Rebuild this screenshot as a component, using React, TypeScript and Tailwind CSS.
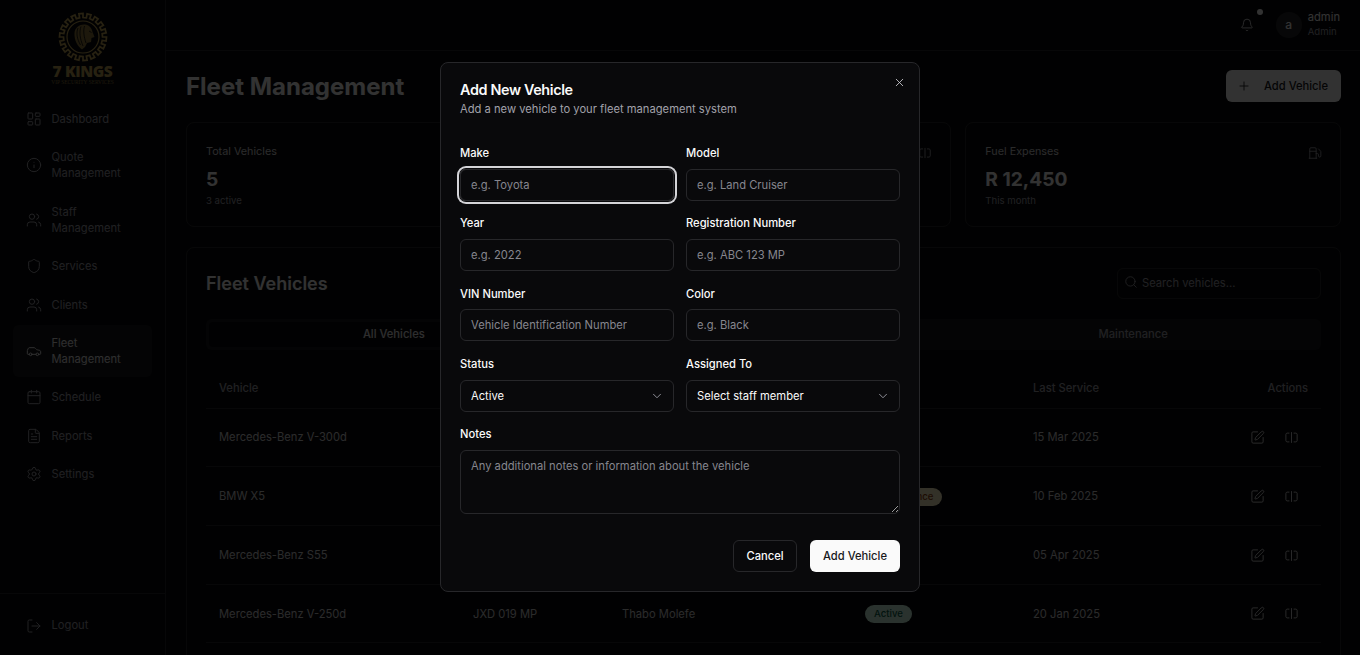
import {
  Bell,
  Calendar,
  Car,
  ChevronDown,
  FileText,
  Fuel,
  Info,
  LayoutDashboard,
  LogOut,
  Plus,
  Search,
  Settings,
  Shield,
  SquarePen,
  SquareSplitHorizontal,
  Users,
  X,
} from 'lucide-react';

const font = { fontFamily: 'Inter, "Liberation Sans", sans-serif' };

const menuItems = [
  { label: ['Dashboard'], icon: LayoutDashboard },
  { label: ['Quote', 'Management'], icon: Info },
  { label: ['Staff', 'Management'], icon: Users },
  { label: ['Services'], icon: Shield },
  { label: ['Clients'], icon: Users },
  { label: ['Fleet', 'Management'], icon: Car, active: true },
  { label: ['Schedule'], icon: Calendar },
  { label: ['Reports'], icon: FileText },
  { label: ['Settings'], icon: Settings },
];

// cells the dialog covers stay empty
const vehicles = [
  { name: 'Mercedes-Benz V-300d', reg: '', staff: '', status: '', service: '15 Mar 2025' },
  { name: 'BMW X5', reg: '', staff: '', status: 'Maintenance', service: '10 Feb 2025' },
  { name: 'Mercedes-Benz S55', reg: '', staff: '', status: '', service: '05 Apr 2025' },
  { name: 'Mercedes-Benz V-250d', reg: 'JXD 019 MP', staff: 'Thabo Molefe', status: 'Active', service: '20 Jan 2025' },
];

function gearPath() {
  const teeth = 18;
  const cx = 25;
  const cy = 25;
  let d = '';
  for (let i = 0; i < teeth; i++) {
    const a = (i / teeth) * Math.PI * 2;
    const step = (Math.PI * 2) / teeth / 2;
    const pts = [
      [19.5, a],
      [23.5, a],
      [23.5, a + step],
      [19.5, a + step],
    ];
    pts.forEach(([r, t], j) => {
      const x = (cx + r * Math.cos(t)).toFixed(2);
      const y = (cy + r * Math.sin(t)).toFixed(2);
      d += `${i === 0 && j === 0 ? 'M' : 'L'}${x} ${y} `;
    });
  }
  return d + 'Z';
}

function Logo() {
  return (
    <div className="flex flex-col items-center pt-3 h-[101px]">
      <svg width="50" height="50" viewBox="0 0 50 50" fill="none" stroke="#c4a657">
        <path d={gearPath()} strokeWidth="1.7" />
        <circle cx="25" cy="25" r="16" strokeWidth="1.2" />
        <path
          d="M16.5 21 C17 15 22 12 27 12.5 C31 13 34 16 34.5 20 L36.5 25 L33.5 26 L33 30 L29 31 L27 35 L24 37.5 C20 35 16 28 16.5 21 Z"
          fill="#8f793f"
          stroke="none"
        />
        <path
          d="M20 16 C18 21 19 27 22.5 33 M23 14.5 C21 20 22 27 25 34 M26.5 14 C25 19 26 25 28 31 M31 19 L33.5 20.5"
          stroke="#09090b"
          strokeWidth="0.8"
        />
      </svg>
      <div
        className="text-[15.5px] leading-[13px] font-extrabold text-[#c4a657] mt-[3px] tracking-tight"
        style={{ fontFamily: '"Open Sans", sans-serif' }}
      >
        7 KINGS
      </div>
      <div
        className="text-[5.4px] leading-[6px] mt-[1px] text-[#8f793f]"
        style={{ fontFamily: '"Liberation Serif", serif' }}
      >
        VIP SECURITY SERVICES
      </div>
    </div>
  );
}

function Sidebar() {
  return (
    <aside className="w-[166px] shrink-0 h-screen border-r border-[#27272a] flex flex-col">
      <Logo />
      <nav className="flex-1 px-[13px] flex flex-col gap-[2.4px]">
        {menuItems.map(({ label, icon: Icon, active }) => (
          <div
            key={label.join(' ')}
            className={`flex items-center gap-[9.5px] px-[13px] py-[10px] rounded-md text-[11.2px] leading-4 text-[#a1a1aa] ${
              active ? 'bg-[#27272a]/50 text-[#e4e4e7]' : ''
            }`}
          >
            <Icon size={16} strokeWidth={1.5} className="shrink-0" />
            <span>
              {label.map((line) => (
                <span key={line} className="block">
                  {line}
                </span>
              ))}
            </span>
          </div>
        ))}
      </nav>
      <div className="h-[62px] border-t border-[#27272a] px-[26px] pt-[2px] flex items-center gap-[9.5px] text-[11.2px] text-[#a1a1aa]">
        <LogOut size={16} strokeWidth={1.5} />
        <span>Logout</span>
      </div>
    </aside>
  );
}

function Header() {
  return (
    <header className="h-[51px] shrink-0 border-b border-[#27272a] flex items-center justify-end pr-5 pb-[1px]">
      <div className="relative mr-[22px]">
        <Bell size={14} strokeWidth={1.5} className="text-[#e4e4e7]" />
        <span className="absolute -top-[9px] -right-[9px] w-[6px] h-[6px] rounded-full bg-[#fafafa]" />
      </div>
      <div className="w-[26px] h-[26px] rounded-full bg-[#27272a] flex items-center justify-center text-[12px] font-medium text-[#fafafa]">
        a
      </div>
      <div className="ml-[6px]">
        <div className="text-[11.2px] leading-[15px] text-[#fafafa]">admin</div>
        <div className="text-[9.6px] leading-[14px] text-[#a1a1aa]">Admin</div>
      </div>
    </header>
  );
}

function StatCard({ title, value, note, icon }: { title?: string; value?: string; note?: string; icon?: React.ReactNode }) {
  return (
    <div className="relative h-[105px] rounded-lg border border-[#27272a] px-[19px] pt-[21px]">
      <div className="text-[10.8px] leading-4 text-[#d4d4d8]">{title}</div>
      <div className="text-[19.2px] leading-7 font-bold text-[#fafafa] mt-[5px]">{value}</div>
      <div className="text-[9.6px] leading-3 text-[#a1a1aa] mt-[2px]">{note}</div>
      {icon && <div className="absolute top-[23px] right-[18px] text-[#a1a1aa]">{icon}</div>}
    </div>
  );
}

function StatusPill({ status }: { status: string }) {
  if (!status) return null;
  const colour = status === 'Active' ? 'bg-[#d1fae5] text-[#065f46]' : 'bg-[#fef3c7] text-[#92400e]';
  return (
    <span className={`inline-block h-[18px] px-[9px] rounded-full text-[9.6px] leading-[18px] font-medium ${colour}`}>
      {status}
    </span>
  );
}

function FleetPage() {
  return (
    <main className="flex-1 overflow-hidden pt-[19px] pl-5 pr-[19px]">
      <div className="flex items-center justify-between h-[32px]">
        <h1 className="text-2xl font-bold text-[#fafafa] pt-[2px]">Fleet Management</h1>
        <button className="h-8 w-[115px] rounded-md bg-[#fafafa] text-[#18181b] text-[11.2px] font-medium flex items-center pl-[11px] gap-[13px]">
          <Plus size={14} strokeWidth={1.5} />
          Add Vehicle
        </button>
      </div>

      <div className="grid grid-cols-3 gap-[14px] mt-[20px]">
        <StatCard title="Total Vehicles" value="5" note="3 active" />
        <StatCard icon={<SquareSplitHorizontal size={14} strokeWidth={1.5} />} />
        <StatCard title="Fuel Expenses" value="R 12,450" note="This month" icon={<Fuel size={14} strokeWidth={1.5} />} />
      </div>

      <section className="mt-[20px] rounded-lg border border-[#27272a] px-[19px] pt-5 h-[500px]">
        <div className="flex items-center justify-between h-[30px]">
          <h2 className="text-[18px] font-semibold text-[#fafafa]">Fleet Vehicles</h2>
          <div className="w-[204px] h-[31px] rounded-md border border-[#27272a] flex items-center px-[6px] gap-[4px] text-[#a1a1aa]">
            <Search size={14} strokeWidth={1.5} className="-mt-[2px]" />
            <span className="text-[11.2px]">Search vehicles...</span>
          </div>
        </div>

        <div className="mt-[21px] h-[31px] p-[3px] rounded-md bg-[#27272a]/50 grid grid-cols-3 text-[11.2px] font-medium text-[#a1a1aa]">
          <div className="rounded bg-[#09090b] flex items-center justify-center text-[#e4e4e7]">All Vehicles</div>
          <div />
          <div className="flex items-center justify-center">Maintenance</div>
        </div>

        <table className="w-full mt-[19px] text-[11.2px] text-[#d4d4d8] table-fixed">
          <thead>
            <tr className="border-b border-[#27272a] h-[39px] text-left text-[#a1a1aa]">
              <th className="font-medium pl-[13px] pt-[1px] w-[267px]">Vehicle</th>
              <th className="font-medium w-[149px]" />
              <th className="font-medium w-[243px]" />
              <th className="font-medium w-[168px]" />
              <th className="font-medium pt-[1px] w-[200px]">Last Service</th>
              <th className="font-medium pt-[1px] text-right pr-[13px]">Actions</th>
            </tr>
          </thead>
          <tbody>
            {vehicles.map((v) => (
              <tr key={v.name} className="border-b border-[#27272a] h-[58.7px]">
                <td className="pl-[13px] pt-[1px]">{v.name}</td>
                <td className="pt-[1px]">{v.reg}</td>
                <td className="pt-[1px]">{v.staff}</td>
                <td className="pt-[1px]">
                  <StatusPill status={v.status} />
                </td>
                <td className="pt-[1px]">{v.service}</td>
                <td className="pt-[1px]">
                  <div className="flex justify-end gap-[19.5px] pr-[22px] text-[#d4d4d8]">
                    <SquarePen size={15} strokeWidth={1.5} />
                    <SquareSplitHorizontal size={15} strokeWidth={1.5} />
                  </div>
                </td>
              </tr>
            ))}
          </tbody>
        </table>
      </section>
    </main>
  );
}

const fieldClass =
  'w-full h-8 rounded-md border border-[#27272a] bg-transparent px-[10px] text-[11.2px] text-[#fafafa] placeholder:text-[#86868e] outline-none';
const labelClass = 'block text-[11.2px] leading-[17px] pt-[0.3px] font-medium text-[#fafafa] mb-[6.7px]';

function Field({ label, placeholder, focused }: { label: string; placeholder: string; focused?: boolean }) {
  return (
    <div>
      <label className={labelClass}>{label}</label>
      <input
        placeholder={placeholder}
        className={`${fieldClass} ${focused ? 'ring-2 ring-[#d4d4d8] ring-offset-1 ring-offset-[#09090b]' : ''}`}
      />
    </div>
  );
}

function SelectField({ label, value }: { label: string; value: string }) {
  return (
    <div>
      <div className={labelClass}>{label}</div>
      <div className="h-8 rounded-md border border-[#27272a] pl-[10px] pr-[9px] pt-[1px] flex items-center justify-between text-[11.2px] text-[#fafafa]">
        {value}
        <ChevronDown size={14} strokeWidth={1.5} className="text-[#a1a1aa]" />
      </div>
    </div>
  );
}

function AddVehicleDialog() {
  return (
    <div className="fixed inset-0 bg-black/80">
      <div className="absolute left-[440px] top-[62px] w-[480px] h-[530px] rounded-lg border border-[#27272a] bg-[#09090b] px-[19px] pt-[17px]">
        <X size={13} strokeWidth={1.5} className="absolute top-[13px] right-[13px] text-[#d4d4d8]" />
        <h2 className="text-[14.4px] leading-5 font-semibold tracking-tight text-[#fafafa]">Add New Vehicle</h2>
        <p className="text-[11.2px] leading-4 text-[#a1a1aa] mt-[1px]">
          Add a new vehicle to your fleet management system
        </p>

        <div className="grid grid-cols-2 gap-x-3 gap-y-[14.25px] mt-[27.9px]">
          <Field label="Make" placeholder="e.g. Toyota" focused />
          <Field label="Model" placeholder="e.g. Land Cruiser" />
          <Field label="Year" placeholder="e.g. 2022" />
          <Field label="Registration Number" placeholder="e.g. ABC 123 MP" />
          <Field label="VIN Number" placeholder="Vehicle Identification Number" />
          <Field label="Color" placeholder="e.g. Black" />
          <SelectField label="Status" value="Active" />
          <SelectField label="Assigned To" value="Select staff member" />
          <div className="col-span-2">
            <label className={labelClass}>Notes</label>
            <textarea
              placeholder="Any additional notes or information about the vehicle"
              className="block w-full h-16 rounded-md border border-[#27272a] bg-transparent px-[10px] py-[7px] text-[11.2px] leading-4 text-[#fafafa] placeholder:text-[#86868e] outline-none"
            />
          </div>
        </div>

        <div className="flex justify-end gap-[13px] mt-[26px]">
          <button className="h-8 w-16 pt-[1px] rounded-md border border-[#27272a] text-[11.2px] font-medium text-[#fafafa]">Cancel</button>
          <button className="h-8 w-[90px] pt-[1px] rounded-md bg-[#fafafa] text-[11.2px] font-medium text-[#18181b]">Add Vehicle</button>
        </div>
      </div>
    </div>
  );
}

export default function App() {
  return (
    <div className="h-screen overflow-hidden flex bg-[#09090b]" style={font}>
      <Sidebar />
      <div className="flex-1 flex flex-col min-w-0">
        <Header />
        <FleetPage />
      </div>
      <AddVehicleDialog />
    </div>
  );
}
